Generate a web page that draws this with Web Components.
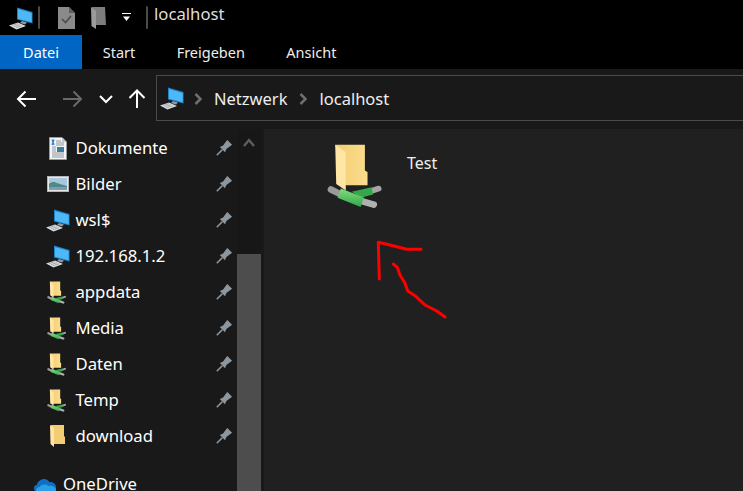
<!DOCTYPE html>
<html lang="de"><head><meta charset="utf-8"><title>localhost</title>
<style>
html,body{margin:0;height:100%;background:#191919;overflow:hidden}
body{font:17px/1.2 "Noto Sans","Open Sans",sans-serif;color:#fff;width:743px;height:491px;display:flex;flex-direction:column}
</style></head><body>
<x-titlebar>localhost</x-titlebar>
<x-tabs><x-tab active>Datei</x-tab><x-tab>Start</x-tab><x-tab>Freigeben</x-tab><x-tab>Ansicht</x-tab></x-tabs>
<x-navbar><x-crumb>Netzwerk</x-crumb><x-crumb next>localhost</x-crumb></x-navbar>
<x-main>
  <x-sidebar>
    <x-item icon="doc" pinned>Dokumente</x-item>
    <x-item icon="pic" pinned>Bilder</x-item>
    <x-item icon="pc" pinned>wsl$</x-item>
    <x-item icon="pc" pinned>192.168.1.2</x-item>
    <x-item icon="netfolder" pinned>appdata</x-item>
    <x-item icon="netfolder" pinned>Media</x-item>
    <x-item icon="netfolder" pinned>Daten</x-item>
    <x-item icon="netfolder" pinned>Temp</x-item>
    <x-item icon="folder" pinned>download</x-item>
    <x-item icon="cloud" root>OneDrive</x-item>
  </x-sidebar>
  <x-content><x-tile>Test</x-tile></x-content>
</x-main>
<script>
const netfolder=(w,h,st='')=>`<svg style="${st}" width="${w}" height="${h}" viewBox="50 42 170 200"><defs><linearGradient id="fb" x1="0" x2="1"><stop offset="0" stop-color="#f3cd72"/><stop offset="1" stop-color="#fbdd8c"/></linearGradient><linearGradient id="gp" x1="0" y1="0" x2="0" y2="1"><stop offset="0" stop-color="#86dc80"/><stop offset="1" stop-color="#2fa64a"/></linearGradient></defs>
<path d="M75 47H165V125L173 130V170H100Z" fill="url(#fb)"/><path d="M75 47L107 70V186L78 166Z" fill="#ffe6a6"/>
<path d="M62 183L90 197" stroke="#9a9a9a" stroke-width="20" stroke-linecap="round"/><path d="M180 189L207 180" stroke="#a5a5a5" stroke-width="17" stroke-linecap="round"/><path d="M155 218L192 229" stroke="#b0b0b0" stroke-width="20" stroke-linecap="round"/>
<path d="M125 190L185 176 190 198 152 208Z" fill="#35a84c"/><path d="M92 180L162 207 152 236 82 208Z" fill="url(#gp)"/></svg>`;
const computer=(s)=>`<svg width="${s}" height="${s}" viewBox="0 0 24 24"><path d="M8 1.500L23.500 6V17.500L8 13.500Z" fill="#1d83c9"/><path d="M9 3L22.700 7V16.300L9 12.700Z" fill="#4db8f5"/><path d="M13 15L18 16.500 16 18.500 11 17Z" fill="#8b9aa6"/><path d="M0 19.500L9 16.500 17 20 7.500 23.500Z" fill="#d9dde0"/><path d="M3 19.500L9 17.600M5 20.600L11 18.700M7 21.700L13 19.800" stroke="#8e959b" stroke-width=".7"/></svg>`;
const ICONS={
 pc:computer(24),
 netfolder:netfolder(19.5,23,'margin-left:-3px'),
 folder:`<svg style="margin-left:-1px" width="15" height="22" viewBox="0 0 15 22"><path d="M1 0H14V11L15 12V19H4Z" fill="#f3cd72"/><path d="M0 0L4 3V22L.5 19Z" fill="#ffe6a6"/></svg>`,
 doc:`<svg width="18" height="23" viewBox="0 0 18 23"><path d="M.5.5H13L17.500 5V22.500H.5Z" fill="#f4f4f4" stroke="#9a9a9a"/><path d="M13 .5V5H17.500Z" fill="#c9c9c9"/><path d="M3 2.500L5 8M5 2.500L3 8" stroke="#2e86d8" stroke-width="1.400"/><path d="M7 4H12M7 6H15M7 8H15M3 10H7M3 12H7M3 14H7M3 16H15M3 18H15M3 20H15" stroke="#8d98a3"/><rect x="8" y="10" width="7" height="5" fill="#3c7d9a"/></svg>`,
 pic:`<svg width="22" height="17" viewBox="0 0 22 17"><rect x=".5" y=".5" width="21" height="15" fill="#e8e8e8" stroke="#b4b4b4"/><rect x="2" y="2" width="18" height="12" fill="#a8c7dd"/><path d="M2 8C5 5 8 6 10 7 13 8 16 9 20 10V14H2Z" fill="#4f8a8a"/><path d="M2 11H20V14H2Z" fill="#7e9db0"/></svg>`,
 cloud:`<svg width="25" height="17" viewBox="0 0 25 17"><path d="M4 16C0 15 0 9 4 9 5 3 14 0 17 6 21 5 25 9 24 13 24 15 23 16 21 17H6Z" fill="#0e6fc5"/><path d="M5 17C2 16 3 11 7 11 9 8 14 8 16 10 19 9 24 11 24 14 24 16 22 17 20 17Z" fill="#2b9fe6"/></svg>`,
 pin:`<svg width="17" height="17" viewBox="0 0 18 18"><path d="M.8 17.200L6.500 11.500" stroke="#8b969e" stroke-width="1.600"/><path d="M4 8.500L7.500 7 11 2 12 1 17 6 16 7 11 10.500 9.500 14Z" fill="#8b969e"/></svg>`
};
function def(name,css,html){customElements.define(name,class extends HTMLElement{constructor(){super();this.attachShadow({mode:'open'}).innerHTML=`<style>${css}</style>${typeof html==='function'?html(this):html}`}})}

def('x-titlebar',`:host{display:flex;align-items:center;height:35px;background:#000;flex:none;color:#dedede;font-size:16.700px}
.pc{margin-left:9px;display:flex}.sep{width:2px;height:23px;background:#4a4a4a;border-radius:1px}
.sep.a{margin-left:5px}.doc{margin-left:18px;display:flex}.pf{margin-left:16px;display:flex}.dd{margin-left:16px;display:flex}.sep.b{margin-left:15px}
.t{margin-left:6px;position:relative;top:-3px}`,
`<span class="pc">${computer(24)}</span><span class="sep a"></span>
<span class="doc"><svg width="17" height="22" viewBox="0 0 17 22"><path d="M0 0H11L17 6V22H0Z" fill="#8a8a8a"/><path d="M11 0V6H17Z" fill="#5f5f5f"/><path d="M4 12L7.500 15.500 13 9" fill="none" stroke="#4b4b4b" stroke-width="1.600"/></svg></span>
<span class="pf"><svg width="15" height="22" viewBox="0 0 15 22"><path d="M1 0H14L15 18H5Z" fill="#7d7d7d"/><path d="M0 0L5 4V22L.5 19Z" fill="#9a9a9a"/></svg></span>
<span class="dd"><svg width="9" height="9" viewBox="0 0 9 9"><path d="M0 .5H9" stroke="#fff"/><path d="M1 3.500H8L4.500 8Z" fill="#fff"/></svg></span>
<span class="sep b"></span><span class="t"><slot></slot></span>`);

def('x-tabs',`:host{display:flex;height:34px;background:#000;flex:none}`,`<slot></slot>`);
def('x-tab',`:host{display:flex;align-items:center;justify-content:center;font-size:14.500px;color:#eee;padding:2px 20.700px 0;height:34px;box-sizing:border-box}
:host([active]){background:#0065c3;color:#fff;width:82px;padding:2px 0 0}`,`<slot></slot>`);

const arrow=(d,c,w=22)=>`<svg width="${w}" height="20" viewBox="0 0 22 20"><path d="${d}" fill="none" stroke="${c}" stroke-width="2"/></svg>`;
def('x-navbar',`:host{display:flex;align-items:center;height:60px;background:#191919;flex:none;box-sizing:border-box}
.b{display:flex;align-items:center}.box{margin-left:10px;flex:1 0 auto;margin-right:-20px;height:46px;box-sizing:border-box;border:1px solid #4b4b4b;display:flex;align-items:center;padding-left:3px;position:relative;top:-1px}
.pc{display:flex;margin-right:-1px}`,
`<span class="b" style="margin-left:16px">${arrow('M2 10H20M9.500 2.500L2 10 9.500 17.500','#fff')}</span>
<span class="b" style="margin-left:24px">${arrow('M1 10H19M11.500 2.500L19 10 11.500 17.500','#6a6a6a')}</span>
<span class="b" style="margin-left:15px"><svg width="14" height="9" viewBox="0 0 14 9"><path d="M1 1L7 7 13 1" fill="none" stroke="#fff" stroke-width="2"/></svg></span>
<span class="b" style="margin-left:15px"><svg width="18" height="20" viewBox="0 0 18 20"><path d="M9 19V1.500M1.500 9L9 1.500 16.500 9" fill="none" stroke="#fff" stroke-width="2"/></svg></span>
<span class="box"><span class="pc">${computer(24)}</span><slot></slot></span>`);
def('x-crumb',`:host{display:flex;align-items:center;font-size:16.500px;color:#eee;padding-top:2px}
:host([next]){margin-left:1px}
svg{margin:0 12px 0 11px}`,`<svg width="8" height="12" viewBox="0 0 8 12"><path d="M1.500 1L6.500 6 1.500 11" fill="none" stroke="#6f6f6f" stroke-width="2.500"/></svg><slot></slot>`);

def('x-main',`:host{display:flex;flex:1;min-height:0}`,`<slot></slot>`);
def('x-sidebar',`:host{display:flex;width:264px;flex:none;background:#191919;position:relative;overflow:hidden}
.list{width:237px;padding-top:1px;flex:none}
.sb{width:24px;background:#171717;display:flex;flex-direction:column;align-items:center;flex:none}
.up{height:125px;width:100%;display:flex;justify-content:center;padding-top:9px;box-sizing:border-box}.th{flex:1;width:100%;background:#4d4d4d}
.gap{width:3px;background:#191919}`,
`<div class="list"><slot></slot></div><div class="sb"><div class="up"><svg width="12" height="9" viewBox="0 0 12 9"><path d="M1 8L6 2 11 8" fill="none" stroke="#5e5e5e" stroke-width="2.400"/></svg></div><div class="th"></div></div><div class="gap"></div>`);
def('x-item',`:host{display:grid;grid-template-columns:24px 1fr 20px;align-items:center;height:36px;padding:0 3px 0 46px;color:#fff;font-size:16.700px;box-sizing:border-box;column-gap:5.500px}
:host([root]){margin-top:12px;padding-left:33px;column-gap:6px}
.i{display:flex;justify-content:center;align-items:center}.p{display:flex;justify-content:center;position:relative;top:-1px}`,
h=>`<span class="i">${ICONS[h.getAttribute('icon')]}</span><span><slot></slot></span><span class="p">${h.hasAttribute('pinned')?ICONS.pin:''}</span>`);
def('x-content',`:host{display:block;flex:1;background:#202020;position:relative;min-width:0}
svg.mark{position:absolute;left:0;top:0;pointer-events:none}`,
`<slot></slot><svg class="mark" width="479" height="362" viewBox="264 129 479 362"><g fill="none" stroke="#f00" stroke-width="3" stroke-linecap="round" stroke-linejoin="round"><path d="M379.300 279L378.300 242.300 390 245 406.700 249.300 421 249.300"/><path d="M393.300 264L397.300 267.300 400 275 405 283.300 407.700 291 415 295.700 425 305 436.700 311 445 317"/></g></svg>`);
def('x-tile',`:host{display:flex;padding:14px 0 0 63px;color:#eee;font-size:16px;gap:24px}
.t{margin-top:11px}`,`${netfolder(56,66)}<span class="t"><slot></slot></span>`);
</script>
</body></html>
